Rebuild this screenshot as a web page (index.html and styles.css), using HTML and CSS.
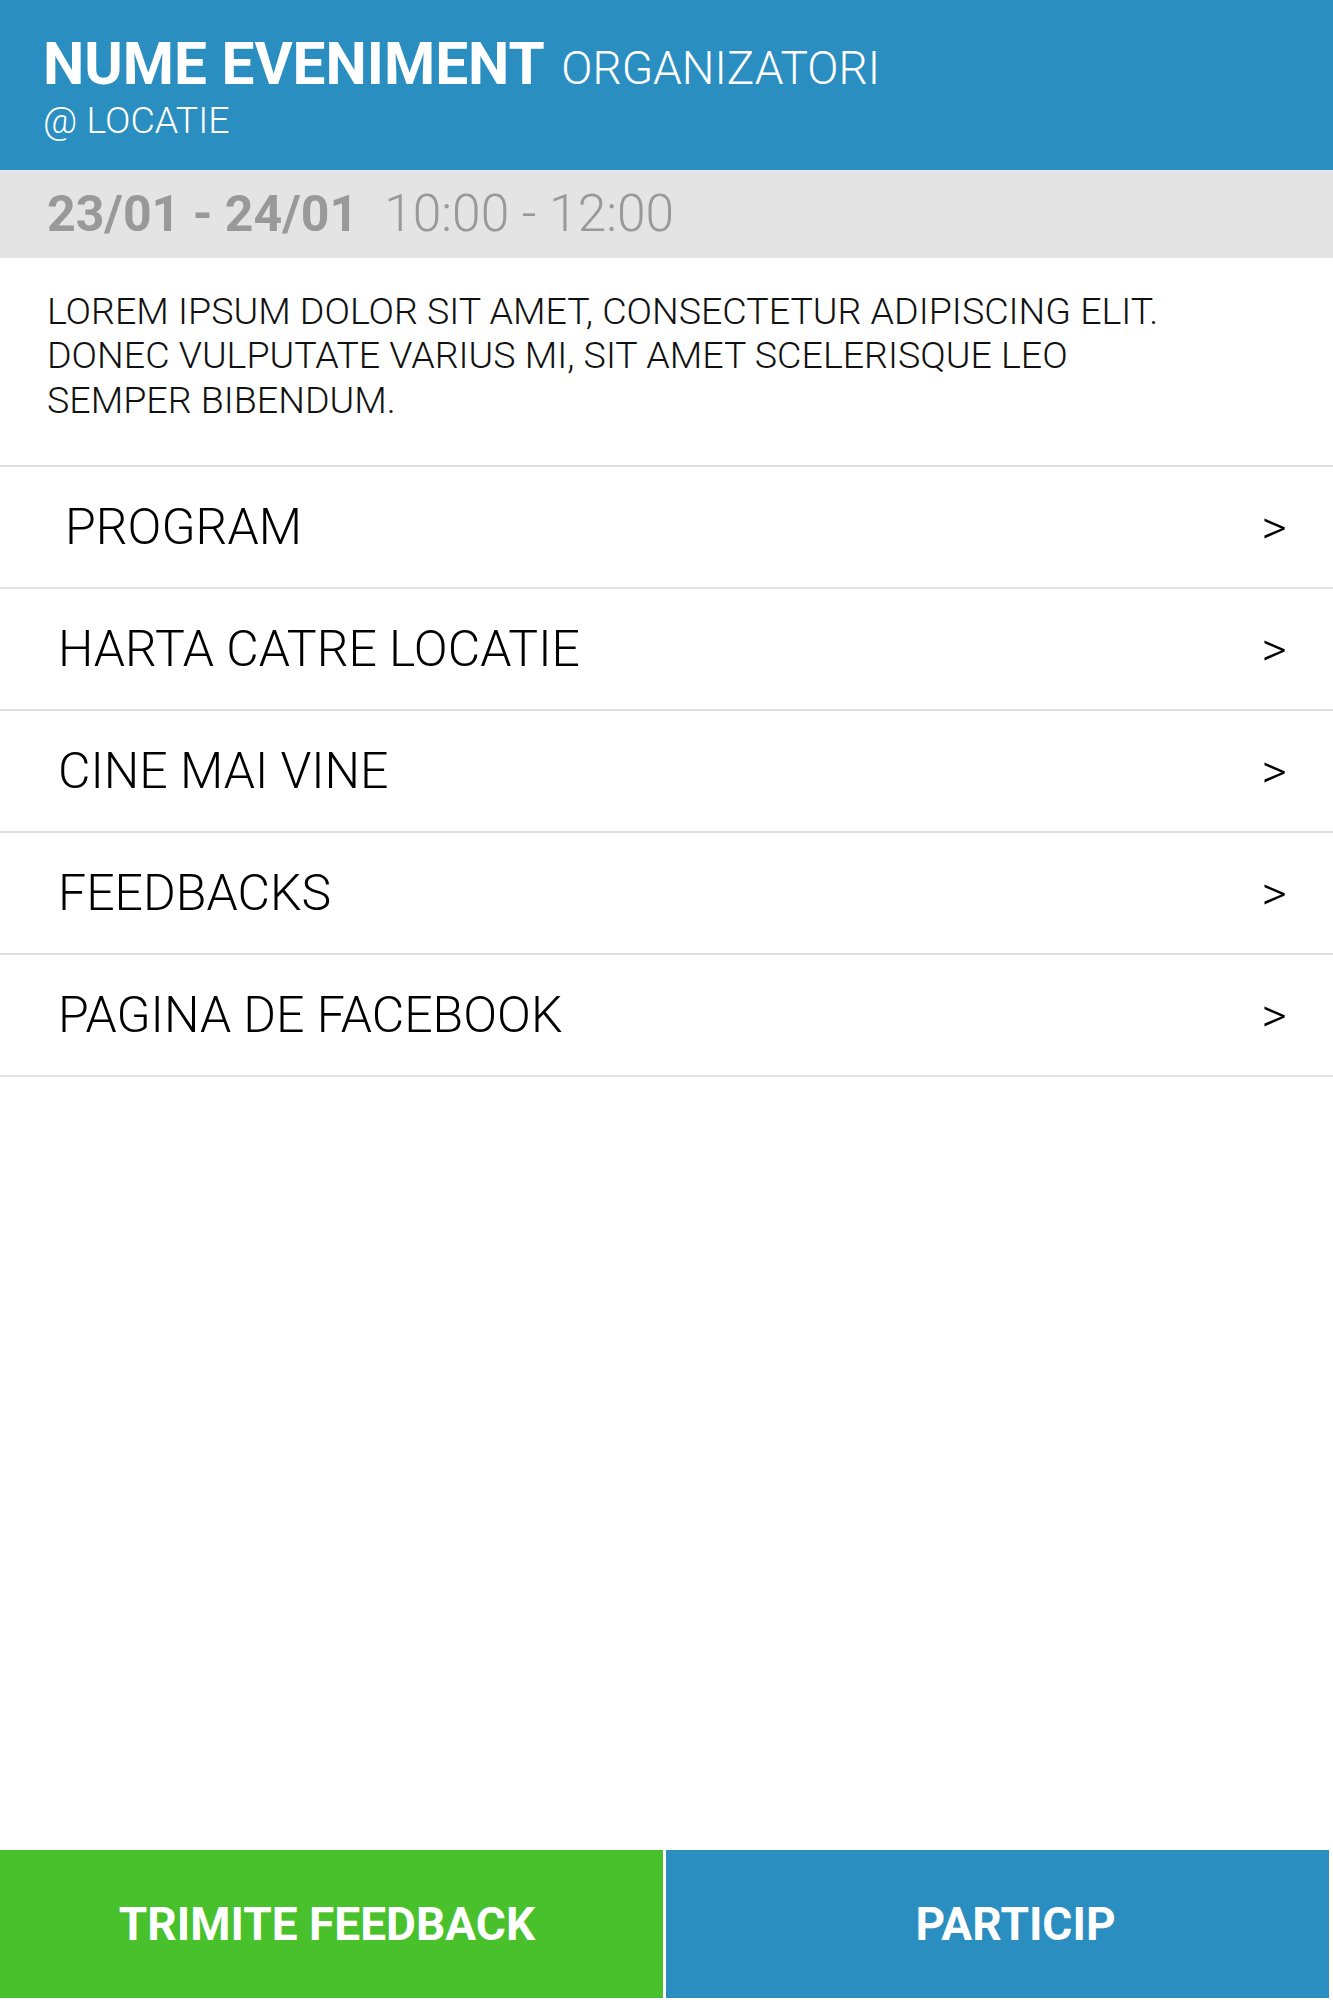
FILE: index.html
```html
<!DOCTYPE html>
<html lang="ro">
<head>
<meta charset="utf-8">
<title>Nume eveniment</title>
<link rel="stylesheet" href="styles.css">
</head>
<body>
<div class="page">
  <header class="header">
    <div class="title-line"><span class="title">NUME EVENIMENT</span> <span class="org">ORGANIZATORI</span></div>
    <div class="location">@ LOCATIE</div>
  </header>
  <div class="dateband">
    <span class="date">23/01 - 24/01</span><span class="time">10:00 - 12:00</span>
  </div>
  <p class="desc">LOREM IPSUM DOLOR SIT AMET, CONSECTETUR ADIPISCING ELIT. DONEC VULPUTATE VARIUS MI, SIT AMET SCELERISQUE LEO SEMPER BIBENDUM.</p>
  <nav class="menu">
    <a class="item item-first" href="#"><span class="label">PROGRAM</span><span class="arrow">&gt;</span></a>
    <a class="item" href="#"><span class="label">HARTA CATRE LOCATIE</span><span class="arrow">&gt;</span></a>
    <a class="item" href="#"><span class="label">CINE MAI VINE</span><span class="arrow">&gt;</span></a>
    <a class="item" href="#"><span class="label">FEEDBACKS</span><span class="arrow">&gt;</span></a>
    <a class="item" href="#"><span class="label">PAGINA DE FACEBOOK</span><span class="arrow">&gt;</span></a>
  </nav>
  <div class="spacer"></div>
  <footer class="actions">
    <a class="btn btn-feedback" href="#">TRIMITE FEEDBACK</a>
    <a class="btn btn-join" href="#">PARTICIP</a>
  </footer>
</div>
</body>
</html>
```
FILE: styles.css
```css
* { box-sizing: border-box; }
html, body { margin: 0; padding: 0; }
body {
  font-family: Roboto, "Liberation Sans", sans-serif;
  background: #ffffff;
  color: #000;
}
.page {
  min-height: 2000px;
  display: flex;
  flex-direction: column;
}
.header {
  background: #2b8ec1;
  color: #fff;
  padding: 35px 40px 30px 43px;
  height: 170px;
}
.title-line {
  font-size: 58.5px;
  line-height: 58px;
  white-space: nowrap;
}
.title {
  font-weight: 700;
}
.org {
  font-weight: 300;
  font-size: 46px;
  line-height: 1;
  margin-left: 2px;
}
.location {
  margin-top: 7px;
  font-weight: 300;
  font-size: 37.5px;
  line-height: 40px;
}
.dateband {
  background: #e4e4e4;
  height: 88px;
  line-height: 88px;
  padding-left: 47px;
  color: #999999;
  font-size: 50px;
  white-space: nowrap;
}
.date { font-weight: 700; }
.time { font-weight: 300; font-size: 51.5px; margin-left: 26px; }
.desc {
  margin: 0;
  padding: 31px 130px 43px 47px;
  font-weight: 300;
  font-size: 37.6px;
  line-height: 44.4px;
  color: #111;
  border-bottom: 2px solid #e0e0e0;
}
.menu { display: flex; flex-direction: column; }
.item {
  height: 122px;
  display: flex;
  align-items: center;
  justify-content: space-between;
  padding: 0 46px 0 58px;
  border-bottom: 2px solid #e0e0e0;
  color: #000;
  text-decoration: none;
}
.item-first { padding-left: 65px; }
.label {
  font-weight: 300;
  font-size: 50px;
}
.arrow {
  font-weight: 300;
  font-size: 49px;
}
.spacer { flex: 1; }
.actions {
  display: grid;
  grid-template-columns: 663px 663px;
  column-gap: 3px;
  height: 148px;
  margin-bottom: 2px;
}
.btn {
  display: flex;
  align-items: center;
  justify-content: center;
  color: #fff;
  text-decoration: none;
  font-weight: 700;
  font-size: 46px;
}
.btn-feedback { background: #48c12d; padding-right: 9px; }
.btn-join { background: #2b8ec1; padding-left: 36px; }
```
